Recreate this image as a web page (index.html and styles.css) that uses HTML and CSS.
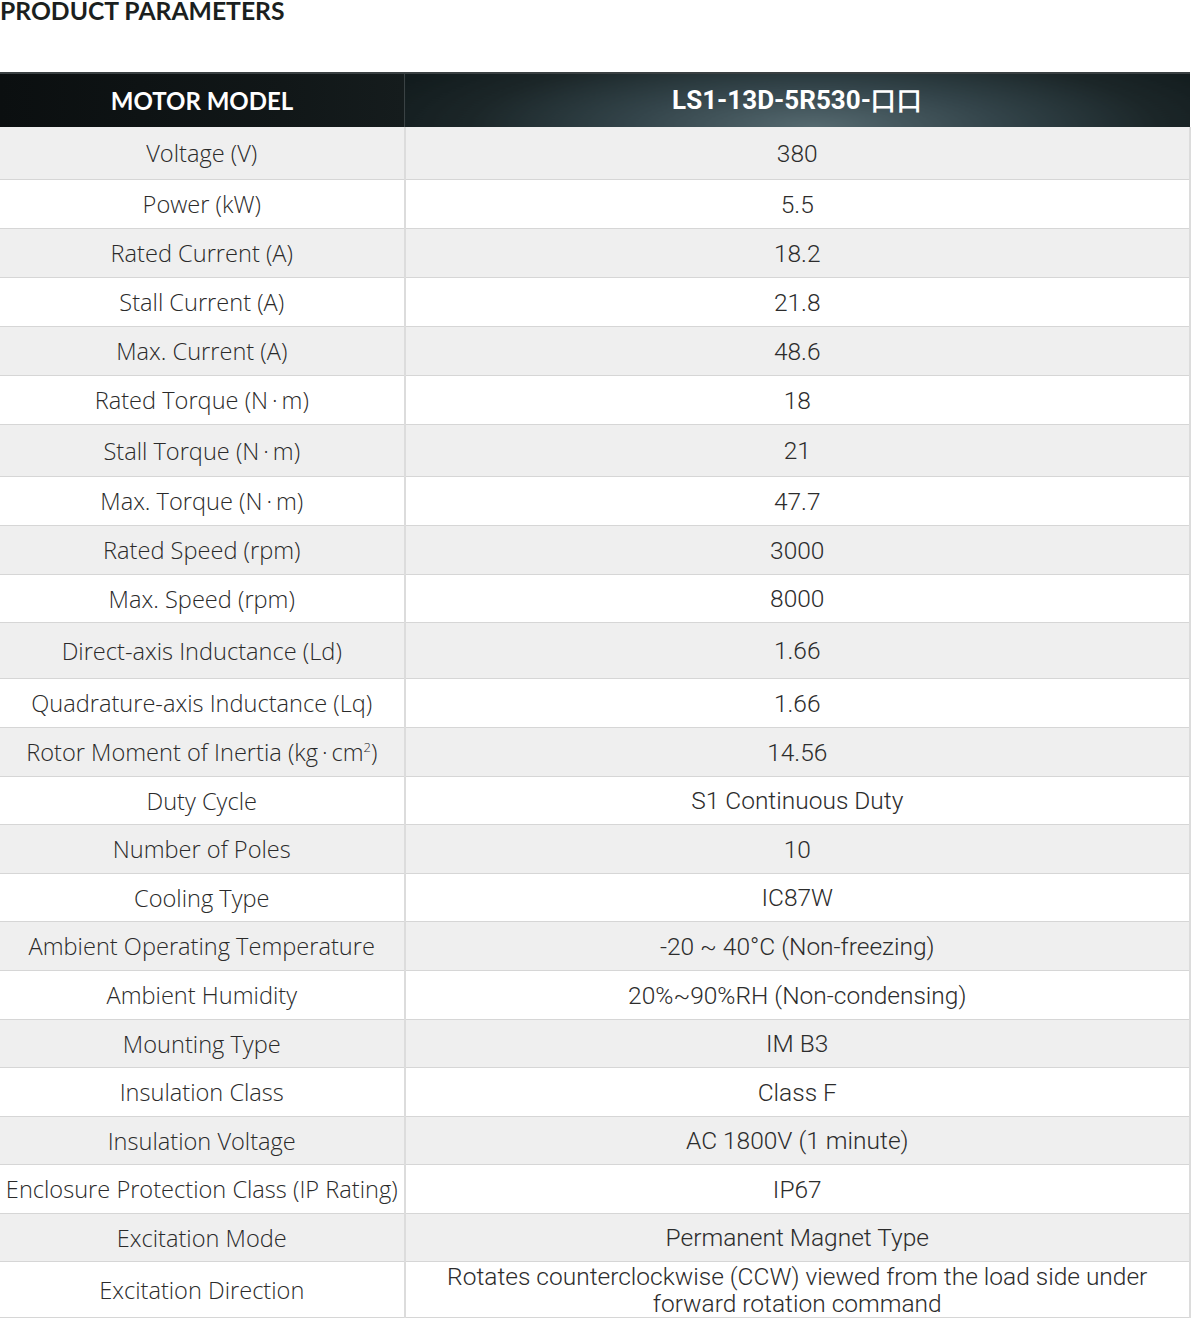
FILE: index.html
```html
<!DOCTYPE html>
<html>
<head>
<meta charset="utf-8">
<link rel="stylesheet" href="styles.css">
</head>
<body>
<h2 class="title">PRODUCT PARAMETERS</h2>
<table class="params">
<thead>
<tr><th class="c1">MOTOR MODEL</th><th class="c2">LS1-13D-5R530-口口</th></tr>
</thead>
<tbody>
<tr class="h53"><td>Voltage (V)</td><td>380</td></tr>
<tr><td>Power (kW)</td><td>5.5</td></tr>
<tr><td>Rated Current (A)</td><td>18.2</td></tr>
<tr><td>Stall Current (A)</td><td>21.8</td></tr>
<tr><td>Max. Current (A)</td><td>48.6</td></tr>
<tr><td>Rated Torque (N&thinsp;·&thinsp;m)</td><td>18</td></tr>
<tr class="h52"><td>Stall Torque (N&thinsp;·&thinsp;m)</td><td>21</td></tr>
<tr><td>Max. Torque (N&thinsp;·&thinsp;m)</td><td>47.7</td></tr>
<tr><td>Rated Speed (rpm)</td><td>3000</td></tr>
<tr class="h48"><td>Max. Speed (rpm)</td><td>8000</td></tr>
<tr class="h56"><td>Direct-axis Inductance (Ld)</td><td>1.66</td></tr>
<tr><td>Quadrature-axis Inductance (Lq)</td><td>1.66</td></tr>
<tr><td>Rotor Moment of Inertia (kg&thinsp;·&thinsp;cm<sup>2</sup>)</td><td>14.56</td></tr>
<tr class="h48"><td>Duty Cycle</td><td>S1 Continuous Duty</td></tr>
<tr><td>Number of Poles</td><td>10</td></tr>
<tr class="h48"><td>Cooling Type</td><td>IC87W</td></tr>
<tr><td>Ambient Operating Temperature</td><td>-20 ~ 40°C (Non-freezing)</td></tr>
<tr><td>Ambient Humidity</td><td>20%~90%RH (Non-condensing)</td></tr>
<tr class="h48"><td>Mounting Type</td><td>IM B3</td></tr>
<tr><td>Insulation Class</td><td>Class F</td></tr>
<tr class="h48"><td>Insulation Voltage</td><td>AC 1800V (1 minute)</td></tr>
<tr><td>Enclosure Protection Class (IP Rating)</td><td>IP67</td></tr>
<tr class="h48"><td>Excitation Mode</td><td>Permanent Magnet Type</td></tr>
<tr class="h56"><td>Excitation Direction</td><td class="wrap">Rotates counterclockwise (CCW) viewed from the load side under forward rotation command</td></tr>
</tbody>
</table>
</body>
</html>
```
FILE: styles.css
```css
html, body {
  margin: 0;
  padding: 0;
  background: #ffffff;
}
.title {
  margin: 0;
  padding: 0;
  font-family: "Lato", "Open Sans", sans-serif;
  font-weight: 700;
  font-size: 24.7px;
  line-height: 22px;
  color: #1b1f20;
  height: 72px;
}
.params {
  width: 1191px;
  border-collapse: collapse;
  table-layout: fixed;
}
.params th {
  height: 53px;
  padding: 0;
  color: #ffffff;
  font-family: "Lato", "Open Sans", sans-serif;
  font-weight: 700;
  font-size: 24px;
  text-align: center;
  border-top: 2px solid #3a4042;
}
.params th.c1 {
  width: 404px;
  background: linear-gradient(90deg, #0b0f10 0%, #111718 70%, #151c1d 100%);
  border-right: 1px solid #3a4244;
}
.params th.c2 {
  background: radial-gradient(ellipse 460px 100px at 52% 100%, #55696f 0%, #33444a 40%, #1b2628 75%, #121b1d 100%);
  font-family: "Roboto", sans-serif;
  font-weight: 700;
  font-size: 26px;
}
.params td {
  height: 48px;
  padding: 0;
  text-align: center;
  color: #333333;
  border-bottom: 1px solid #d6d6d6;
  border-right: 2px solid #dcdcdc;
}
.params td:first-child {
  font-family: "Open Sans", sans-serif;
  font-weight: 300;
  font-size: 23.6px;
  color: #2a2a2a;
}
.params td:last-child {
  font-family: "Roboto", sans-serif;
  font-weight: 300;
  font-size: 24.5px;
  color: #2c2c2c;
}
.params tbody tr:nth-child(odd) td {
  background: #efefef;
}
.params tr.h53 td { height: 52px; }
.params tr.h52 td { height: 51px; }
.params tr.h48 td { height: 47px; }
.params tr.h56 td { height: 55px; }
.params td.wrap {
  line-height: 27px;
  padding: 0 40px;
}
.params sup {
  font-size: 13px;
  line-height: 0;
}
```
